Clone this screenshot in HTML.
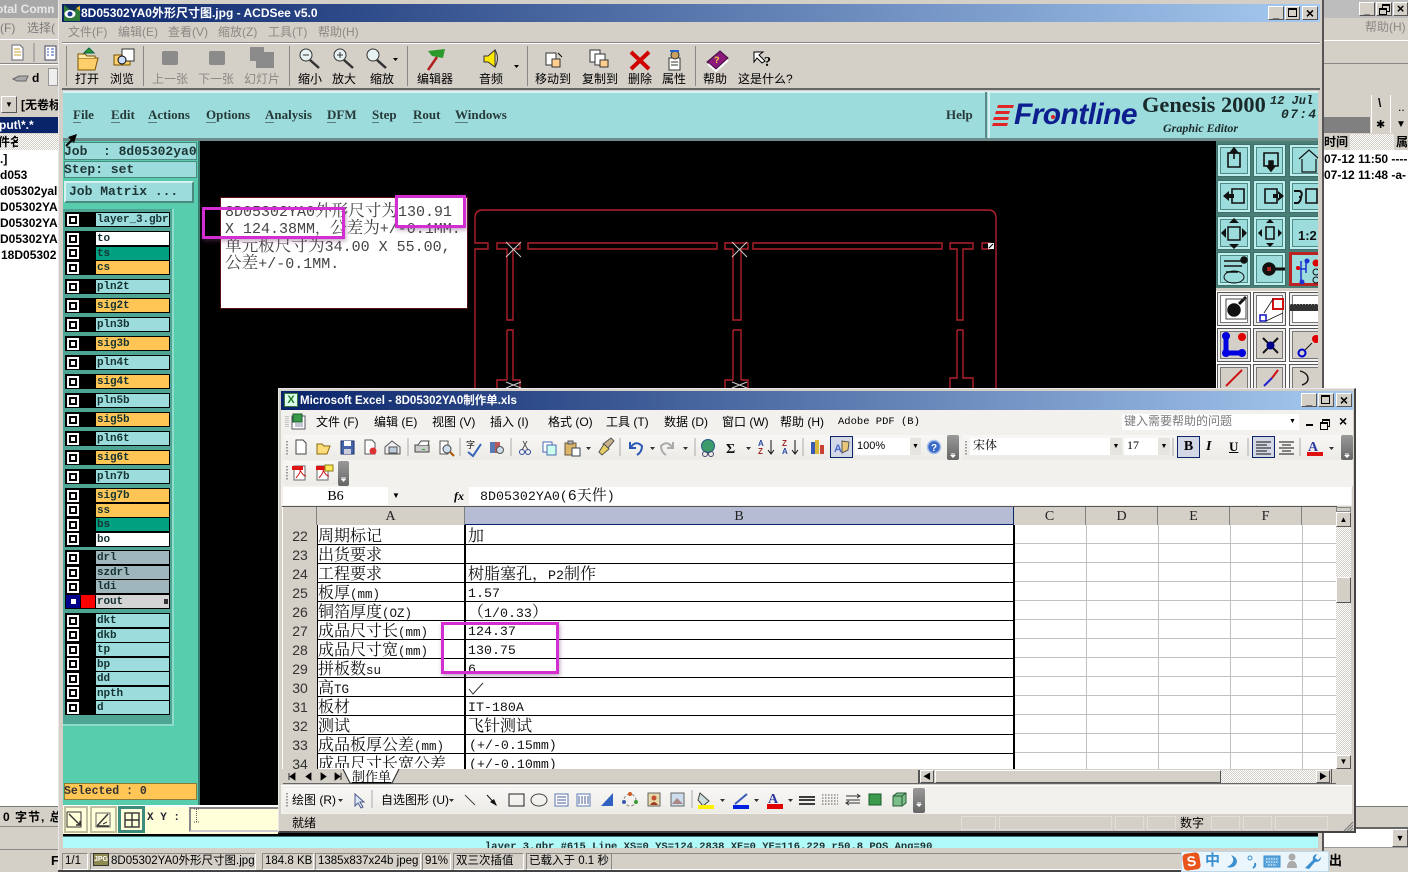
<!DOCTYPE html>
<html><head><meta charset="utf-8"><title>ACDSee Genesis Excel</title>
<style>
html,body{margin:0;padding:0;width:1408px;height:872px;overflow:hidden;background:#d4d0c8}
body{position:relative;font-family:"Liberation Sans","Noto Sans CJK SC",sans-serif;font-size:12px;color:#000}
div,svg{position:absolute}
.t{white-space:nowrap;line-height:16px}
.g{color:#8b8985}
.s{font-family:"Liberation Mono","Noto Serif CJK SC",serif;font-size:15px;line-height:18px;color:#444;white-space:nowrap;left:225px}
.s span{font-size:16.6px}
.cell{font-family:"Liberation Mono","Noto Serif CJK SC",serif;font-size:13.3px;line-height:18px;color:#111;white-space:nowrap;left:468px;margin-top:1px}
.ca{font-family:"Noto Serif CJK SC",serif;font-size:16px;line-height:18px;color:#111;white-space:nowrap;left:318px;margin-top:-1px}
.ca span{font-family:"Liberation Mono",monospace;font-size:12.5px}
.rn{left:284px;width:32px;text-align:center;font-size:14px;line-height:18px;color:#333}
.hl{left:317px;width:698px;height:1px;background:#000}
.cb{left:67px;width:8px;height:8px;border:2px solid #fff;background:#fff;box-shadow:inset 0 0 0 2px #000}
.n{left:96px;width:73px;height:13px;background:#9ddcdc;font:bold 11px/15px "Liberation Mono",monospace;color:#143232;letter-spacing:-.1px;padding-left:1px;box-sizing:border-box;white-space:nowrap;overflow:hidden}
.o{background:#ffc655}.w{background:#fff}.e{background:#00a080}.h{background:#9fb6bc}
.blk{left:65px;width:105px;background:#000}
.gm{font:bold 13px/16px "Liberation Serif",serif;color:#263a3a;white-space:nowrap}
.gm u{text-decoration:none;border-bottom:1px solid #5b7a7a}
.mag{border:3px solid #d22ed2;box-shadow:1px 2px 4px rgba(120,60,120,.45)}
.tb{background:#9ddcdc;box-shadow:inset 0 0 0 1px #3f6f6a,inset 0 0 0 3px #bfeeee,inset 0 0 0 4px #4c8a84}
.gb{background:#d4d0c8;box-shadow:inset 0 0 0 1px #555,inset 0 0 0 3px #eee,inset 0 0 0 4px #777}
.xm{font-size:12px;line-height:16px;white-space:nowrap}
.xm b{font-family:"Liberation Mono",monospace;font-weight:normal;font-size:11px}
.sb{top:853px;height:15px;border:1px solid #8c8984;border-right-color:#fff;border-bottom-color:#fff;font-size:11.5px;line-height:15px;white-space:nowrap;padding-left:2px;box-sizing:content-box;overflow:hidden}
.st{top:816px;height:12px;border:1px solid #e2dfd8}
.drop{background:#e6e4de;text-align:center;font-size:7px;line-height:17px;color:#000}
.hh{top:507px;height:18px;background:#d4d0c8;font:14px/19px "Liberation Serif",serif;text-align:center;color:#222;border-right:1px solid #808080;box-sizing:border-box}
.chk{background:repeating-conic-gradient(#d4d0c8 0 25%,#fff 0 50%) 0 0/2px 2px}
.btn{background:#d4d0c8;border:1px solid;border-color:#fff #555 #555 #fff;box-sizing:border-box}
</style></head><body>

<!-- left background window -->
<div style="left:0;top:0;width:58px;height:18px;background:#a9a9a9"></div>
<div class="t" style="left:0;top:1px;color:#e8e8e8;font-weight:bold;font-size:12px;width:58px;overflow:hidden;margin-left:-4px">otal Comm</div>
<div class="t g" style="left:0;top:20px;color:#7d7b77">(F)</div>
<div class="t g" style="left:27px;top:20px;width:31px;overflow:hidden;color:#7d7b77">选择(</div>
<div style="left:0;top:39px;width:58px;height:1px;background:#fff"></div>
<div style="left:0;top:63px;width:58px;height:1px;background:#888"></div>
<div style="left:0;top:64px;width:58px;height:1px;background:#fff"></div>
<svg style="left:0;top:40px" width="58" height="48" fill="none">
<path d="M12 5H20L23 8V20H12Z" fill="#fff" stroke="#667"/><path d="M14 9H20M14 12H21M14 15H21" stroke="#c9a030"/>
<path d="M34 3V22" stroke="#888"/><rect x="45" y="6" width="11" height="14" fill="#fff" stroke="#446"/><path d="M47 9H49M47 12H49M47 15H49M51 9H54M51 12H54M51 15H54" stroke="#3050b0"/>
<path d="M13 39L19 36H28L26 41H17Z" fill="#aaa" stroke="#666"/>
</svg>
<div class="t" style="left:32px;top:70px;font-weight:bold">d</div>
<div style="left:48px;top:68px;width:10px;height:18px;background:#eee;border:1px solid #999;box-sizing:border-box"></div>
<div class="btn" style="left:1px;top:96px;width:16px;height:17px;text-align:center;font-size:8px;line-height:15px">▼</div>
<div class="t" style="left:21px;top:97px;font-weight:bold;width:37px;overflow:hidden">[无卷标</div>
<div style="left:0;top:117px;width:58px;height:16px;background:#0a246a;color:#fff;font:bold 12px/16px 'Liberation Sans'; white-space:nowrap;overflow:hidden;margin:0"><span style="margin-left:-1px">put\*.*</span></div>
<div class="chk" style="left:0;top:134px;width:58px;height:16px"></div>
<div class="t" style="left:0;top:134px;font-weight:bold;width:20px;overflow:hidden;margin-left:-2px">件名</div>
<div style="left:0;top:150px;width:58px;height:656px;background:#fff"></div>
<div class="t" style="left:0;top:151px;font-weight:bold">.]</div>
<div class="t" style="left:0;top:167px;font-weight:bold">d053</div>
<div class="t" style="left:0;top:183px;font-weight:bold;width:58px;overflow:hidden">d05302yal</div>
<div class="t" style="left:0;top:199px;font-weight:bold;width:58px;overflow:hidden">D05302YA</div>
<div class="t" style="left:0;top:215px;font-weight:bold;width:58px;overflow:hidden">D05302YA</div>
<div class="t" style="left:0;top:231px;font-weight:bold;width:58px;overflow:hidden">D05302YA</div>
<div class="t" style="left:1px;top:247px;font-weight:bold;width:57px;overflow:hidden">18D05302</div>
<div style="left:0;top:806px;width:58px;height:20px;background:#d4d0c8;border-top:1px solid #777;box-sizing:border-box"></div>
<div class="t" style="left:3px;top:809px;font-weight:bold;width:55px;overflow:hidden;letter-spacing:1px">0 字节, 总</div>
<div style="left:0;top:826px;width:58px;height:1px;background:#888"></div>
<div style="left:0;top:849px;width:58px;height:1px;background:#888"></div>
<div class="t" style="left:51px;top:853px;font-weight:bold;font-size:13px">F</div>

<!-- right background window -->
<div style="left:1324px;top:0;width:84px;height:18px;background:#bdbdbd"></div>
<div class="btn" style="left:1359px;top:2px;width:16px;height:14px;font-size:10px;text-align:center;line-height:16px;font-weight:bold">_</div>
<div class="btn" style="left:1376px;top:2px;width:16px;height:14px"></div>
<div style="left:1382px;top:4px;width:6px;height:5px;border:1px solid #000;border-top-width:2px;box-sizing:content-box"></div><div style="left:1379px;top:8px;width:6px;height:4px;border:1px solid #000;border-top-width:2px;background:#d4d0c8"></div>
<div class="btn" style="left:1393px;top:2px;width:15px;height:14px;font-size:13px;text-align:center;line-height:11px;font-weight:bold">×</div>
<div class="t g" style="left:1365px;top:19px;font-size:12px">帮助(H)</div>
<div style="left:1324px;top:40px;width:84px;height:1px;background:#fff"></div>
<div style="left:1324px;top:63px;width:84px;height:1px;background:#888"></div>
<div style="left:1324px;top:117px;width:46px;height:16px;background:#808080"></div>
<div class="t" style="left:1378px;top:95px;font-weight:bold">\</div>
<div class="t" style="left:1398px;top:99px;">..</div>
<div class="t" style="left:1376px;top:117px;font-size:11px">✱</div>
<div class="t" style="left:1396px;top:117px;font-size:10px">▼</div>
<div style="left:1371px;top:95px;width:1px;height:38px;background:#fff"></div>
<div style="left:1390px;top:95px;width:1px;height:38px;background:#fff"></div>
<div class="chk" style="left:1324px;top:134px;width:84px;height:16px"></div>
<div class="t" style="left:1324px;top:134px;font-weight:bold;background:#d4d0c8;padding-right:2px;overflow:hidden;width:24px">时间</div>
<div class="t" style="left:1394px;top:134px;font-weight:bold;background:#d4d0c8;padding:0 2px;width:12px;overflow:hidden">属</div>
<div style="left:1324px;top:150px;width:84px;height:656px;background:#fff"></div>
<div class="t" style="left:1324px;top:151px;font-weight:bold;white-space:nowrap;overflow:hidden;width:84px">07-12 11:50 ----</div>
<div class="t" style="left:1324px;top:167px;font-weight:bold;white-space:nowrap;overflow:hidden;width:84px">07-12 11:48 -a-</div>
<div style="left:1324px;top:806px;width:84px;height:21px;background:#d4d0c8;border-top:1px solid #777;box-sizing:border-box"></div>
<div style="left:1324px;top:827px;width:84px;height:21px;background:#fff;border-top:2px solid #666;border-bottom:1px solid #999;box-sizing:border-box"></div>
<div class="btn" style="left:1392px;top:829px;width:16px;height:18px;font-size:9px;text-align:center;line-height:16px">▼</div>
<div class="t" style="left:1329px;top:853px;font-weight:bold;font-size:13px">出</div>

<!-- ACDSee window -->
<div style="left:58px;top:0;width:1266px;height:872px;background:#d4d0c8;border-right:2px solid #555;box-sizing:border-box;border-left:1px solid #e8e8e8"></div>
<div style="left:62px;top:4px;width:1258px;height:18px;background:linear-gradient(90deg,#0a246a,#a6caf0)"></div>
<svg style="left:64px;top:5px" width="16" height="16"><rect width="16" height="16" fill="#2f7a3a"/><path d="M0 0H16L9 7Z" fill="#0d2a5a"/><ellipse cx="6" cy="9" rx="5.500" ry="4" fill="#fff"/><circle cx="6" cy="9" r="2.500" fill="#1a3a8a"/><path d="M12 3L16 1V6Z" fill="#e8b030"/></svg>
<div class="t" style="left:81px;top:5px;color:#fff;font-weight:bold;font-size:12px">8D05302YA0外形尺寸图.jpg - ACDSee v5.0</div>
<div class="btn" style="left:1268px;top:6px;width:16px;height:14px;text-align:center;font-weight:bold;font-size:11px;line-height:14px">_</div>
<div class="btn" style="left:1285px;top:6px;width:15px;height:14px"></div>
<div style="left:1288px;top:8px;width:9px;height:9px;border:1px solid #000;border-top-width:2px;box-sizing:border-box"></div>
<div class="btn" style="left:1302px;top:6px;width:16px;height:14px;text-align:center;font-weight:bold;font-size:14px;line-height:12px">×</div>
<div class="t g" style="left:68px;top:24px">文件(F)</div><div class="t g" style="left:118px;top:24px">编辑(E)</div><div class="t g" style="left:168px;top:24px">查看(V)</div><div class="t g" style="left:218px;top:24px">缩放(Z)</div><div class="t g" style="left:268px;top:24px">工具(T)</div><div class="t g" style="left:318px;top:24px">帮助(H)</div>
<div style="left:62px;top:42px;width:1258px;height:1px;background:#888"></div>
<div style="left:62px;top:43px;width:1258px;height:1px;background:#fff"></div>
<div style="left:62px;top:88px;width:1258px;height:2px;background:#666"></div>
<div style="left:66px;top:46px;width:1px;height:40px;background:#888"></div>
<div style="left:143px;top:46px;width:1px;height:40px;background:#888"></div>
<div style="left:289px;top:46px;width:1px;height:40px;background:#888"></div>
<div style="left:407px;top:46px;width:1px;height:40px;background:#888"></div>
<div style="left:527px;top:46px;width:1px;height:40px;background:#888"></div>
<div style="left:695px;top:46px;width:1px;height:40px;background:#888"></div>
<div class="t" style="left:75px;top:71px">打开</div><div class="t" style="left:110px;top:71px">浏览</div>
<div class="t g" style="left:152px;top:71px">上一张</div><div class="t g" style="left:198px;top:71px">下一张</div><div class="t g" style="left:244px;top:71px">幻灯片</div>
<div class="t" style="left:298px;top:71px">缩小</div><div class="t" style="left:332px;top:71px">放大</div><div class="t" style="left:370px;top:71px">缩放</div>
<div class="t" style="left:417px;top:71px">编辑器</div><div class="t" style="left:479px;top:71px">音频</div>
<div class="t" style="left:535px;top:71px">移动到</div><div class="t" style="left:582px;top:71px">复制到</div><div class="t" style="left:628px;top:71px">删除</div><div class="t" style="left:662px;top:71px">属性</div>
<div class="t" style="left:703px;top:71px">帮助</div><div class="t" style="left:738px;top:71px">这是什么?</div>

<!-- Genesis -->
<div style="left:63px;top:91px;width:1255px;height:50px;background:#9ddcdc;border-top:2px solid #d8f2f2;border-bottom:3px solid #6d8d8d;box-sizing:border-box"></div>
<div class="gm" style="left:73px;top:107px"><u>F</u>ile</div><div class="gm" style="left:111px;top:107px"><u>E</u>dit</div><div class="gm" style="left:148px;top:107px"><u>A</u>ctions</div><div class="gm" style="left:206px;top:107px"><u>O</u>ptions</div><div class="gm" style="left:265px;top:107px"><u>A</u>nalysis</div><div class="gm" style="left:327px;top:107px"><u>D</u>FM</div><div class="gm" style="left:372px;top:107px"><u>S</u>tep</div><div class="gm" style="left:413px;top:107px"><u>R</u>out</div><div class="gm" style="left:455px;top:107px"><u>W</u>indows</div><div class="gm" style="left:946px;top:107px">Help</div>
<div style="left:985px;top:92px;width:2px;height:46px;background:#5f8a8a"></div>
<div style="left:988px;top:92px;width:2px;height:46px;background:#d8f2f2"></div>
<div style="left:1014px;top:97px;font:italic bold 30px/36px 'Liberation Sans';color:#0d1f8f;letter-spacing:-.6px;white-space:nowrap">Frontline</div>
<div style="left:1051px;top:115px;width:4px;height:4px;background:#e02020;border-radius:50%"></div>
<div style="left:1142px;top:91px;font:bold 22.400px/28px 'Liberation Serif';color:#1a2a2a;white-space:nowrap">Genesis 2000</div>
<div style="left:1163px;top:120px;font:italic bold 12px/16px 'Liberation Serif';color:#1a2a2a;white-space:nowrap">Graphic Editor</div>
<div style="left:1270px;top:94px;font:italic bold 12px/14px 'Liberation Mono';color:#1a2a2a;white-space:nowrap">12 Jul</div>
<div style="left:1281px;top:108px;font:italic bold 13px/14px 'Liberation Mono';color:#1a2a2a;white-space:nowrap;width:37px;overflow:hidden;letter-spacing:1.3px">07:45</div>

<div style="left:63px;top:141px;width:1255px;height:695px;background:#000"></div>
<div style="left:63px;top:141px;width:135px;height:665px;background:#57cdae"></div>
<div style="left:198px;top:141px;width:2px;height:665px;background:#3d7c70"></div>
<div style="left:64px;top:142px;width:133px;height:18px;background:#9ddcdc;box-shadow:inset 0 0 0 1px #4b8a80;font:bold 13px/19px 'Liberation Mono';color:#1d3535;white-space:pre">Job  : 8d05302ya0</div>
<div style="left:64px;top:161px;width:133px;height:17px;background:#9ddcdc;box-shadow:inset 0 0 0 1px #4b8a80;font:bold 13px/17px 'Liberation Mono';color:#1d3535;white-space:pre">Step: set</div>
<div style="left:64px;top:181px;width:130px;height:22px;background:#9ddcdc;border:2px solid;border-color:#d8f2f2 #4b8a80 #4b8a80 #d8f2f2;box-sizing:border-box;font:bold 13px/18px 'Liberation Mono';color:#1d3535;white-space:pre;padding-left:3px">Job Matrix ...</div>
<div style="left:63px;top:209px;width:111px;height:517px;background:#4ea594;border-right:2px solid #8edcca;border-bottom:2px solid #8edcca;box-sizing:border-box"></div>

<!-- layers black boxes -->
<div class="blk" style="top:212px;height:15px"></div><div class="blk" style="top:231px;height:44px"></div><div class="blk" style="top:279px;height:15px"></div><div class="blk" style="top:298px;height:15px"></div><div class="blk" style="top:317px;height:15px"></div><div class="blk" style="top:336px;height:15px"></div><div class="blk" style="top:355px;height:15px"></div><div class="blk" style="top:374px;height:15px"></div><div class="blk" style="top:393px;height:15px"></div><div class="blk" style="top:412px;height:15px"></div><div class="blk" style="top:431px;height:15px"></div><div class="blk" style="top:450px;height:15px"></div><div class="blk" style="top:469px;height:15px"></div><div class="blk" style="top:488px;height:59px"></div><div class="blk" style="top:550px;height:59px"></div><div class="blk" style="top:613px;height:102px"></div>
<div class="cb" style="top:214px"></div><div class="n" style="top:213px">layer_3.gbr</div>
<div class="cb" style="top:233px"></div><div class="n w" style="top:232px">to</div>
<div class="cb" style="top:247px"></div><div class="n e" style="top:247px">ts</div>
<div class="cb" style="top:262px"></div><div class="n o" style="top:261px">cs</div>
<div class="cb" style="top:281px"></div><div class="n" style="top:280px">pln2t</div>
<div class="cb" style="top:300px"></div><div class="n o" style="top:299px">sig2t</div>
<div class="cb" style="top:319px"></div><div class="n" style="top:318px">pln3b</div>
<div class="cb" style="top:338px"></div><div class="n o" style="top:337px">sig3b</div>
<div class="cb" style="top:357px"></div><div class="n" style="top:356px">pln4t</div>
<div class="cb" style="top:376px"></div><div class="n o" style="top:375px">sig4t</div>
<div class="cb" style="top:395px"></div><div class="n" style="top:394px">pln5b</div>
<div class="cb" style="top:414px"></div><div class="n o" style="top:413px">sig5b</div>
<div class="cb" style="top:433px"></div><div class="n" style="top:432px">pln6t</div>
<div class="cb" style="top:452px"></div><div class="n o" style="top:451px">sig6t</div>
<div class="cb" style="top:471px"></div><div class="n" style="top:470px">pln7b</div>
<div class="cb" style="top:490px"></div><div class="n o" style="top:489px">sig7b</div>
<div class="cb" style="top:504px"></div><div class="n o" style="top:504px">ss</div>
<div class="cb" style="top:519px"></div><div class="n e" style="top:518px">bs</div>
<div class="cb" style="top:533px"></div><div class="n w" style="top:533px">bo</div>
<div class="cb" style="top:552px"></div><div class="n h" style="top:551px">drl</div>
<div class="cb" style="top:567px"></div><div class="n h" style="top:566px">szdrl</div>
<div class="cb" style="top:581px"></div><div class="n h" style="top:580px">ldi</div>
<div style="left:66px;top:595px;width:14px;height:13px;background:#000088"></div>
<div style="left:71px;top:599px;width:5px;height:5px;background:#fff"></div>
<div style="left:81px;top:595px;width:14px;height:13px;background:#f00"></div>
<div class="n" style="top:595px;background:#d4d4d4">rout</div><div style="left:164px;top:599px;width:4px;height:5px;background:#333"></div>
<div class="cb" style="top:615px"></div><div class="n" style="top:614px">dkt</div>
<div class="cb" style="top:629px"></div><div class="n" style="top:629px">dkb</div>
<div class="cb" style="top:644px"></div><div class="n" style="top:643px">tp</div>
<div class="cb" style="top:658px"></div><div class="n" style="top:658px">bp</div>
<div class="cb" style="top:673px"></div><div class="n" style="top:672px">dd</div>
<div class="cb" style="top:687px"></div><div class="n" style="top:687px">npth</div>
<div class="cb" style="top:702px"></div><div class="n" style="top:701px">d</div>

<div style="left:64px;top:783px;width:133px;height:17px;background:#ffc655;box-shadow:inset 0 0 0 1px #8a7a3a;font:bold 11.5px/17px 'Liberation Mono';color:#333;white-space:pre">Selected : 0</div>
<div style="left:63px;top:805px;width:215px;height:29px;background:#ffffd9;border-top:2px solid #fff;box-sizing:border-box"></div>
<div style="left:64px;top:806px;width:24px;height:27px;background:#ffffd9;box-shadow:inset 0 0 0 2px #c0c0a0"></div>
<div style="left:90px;top:806px;width:27px;height:27px;background:#ffffd9;box-shadow:inset 0 0 0 2px #c0c0a0"></div>
<div style="left:118px;top:806px;width:27px;height:27px;background:#ffffd9;box-shadow:inset 0 0 0 3px #3d8c80"></div>
<svg style="left:63px;top:805px" width="130" height="30" fill="none" stroke="#333">
<rect x="4" y="7" width="14" height="15"/><path d="M6 9L17 20M13 20H17V16" stroke-width="1.400"/>
<path d="M33 8H47V22H33Z" stroke="#666"/><path d="M34 21H46M34 21L45 9" stroke-width="1.400"/><path d="M40 19L44 17" stroke-width="1"/>
<rect x="62" y="8" width="14" height="14" stroke-width="1.400"/><path d="M69 8V22M62 15H76" stroke-width="1.400"/>
</svg>
<div style="left:147px;top:811px;font:bold 11px/14px 'Liberation Mono';color:#223;white-space:pre">X Y :</div>
<div style="left:189px;top:807px;width:91px;height:25px;background:#ffffd9;border:2px solid;border-color:#888 #fff #ccc #888;box-sizing:border-box"></div>
<svg style="left:193px;top:808px" width="8" height="16" fill="none"><path d="M1 1H6M1 14H6M3.500 1V14" stroke="#555" stroke-dasharray="1 1"/></svg>
<div style="left:63px;top:836px;width:1255px;height:12px;background:#b0fafa;overflow:hidden;border-top:1px solid #3e7777;box-sizing:border-box"><div style="left:422px;top:4px;font:bold 10.5px/12px 'Liberation Mono';color:#233;white-space:nowrap">layer_3.gbr #615 Line XS=0 YS=124.2838 XE=0 YE=116.229 r50.8 POS Ang=90</div></div>

<!-- canvas drawing -->
<svg style="left:0;top:0" width="1408" height="872" fill="none">
<g stroke="#b2202c" stroke-width="1.4">
<path d="M475 388V249H488V243H475V218Q475 210 483 210H988Q996 210 996 218V388"/>
<path d="M497 243H520V249H513V320H507V249H497ZM507 330H513V380H520V388M507 380V330"/>
<path d="M528 243H717V249H528ZM753 243H942V249H753Z"/>
<path d="M725 243H748V249H741V320H733V249H725ZM733 330H741V380M733 330V380"/>
<path d="M950 243H973V249H963V320H957V249H950ZM957 330H963V378H973V388M957 330V378H950V388"/>
<path d="M982 243H990V249H982Z"/>
<path d="M507 380H497V388M733 380H725V388M741 380H748V388"/>
</g>
<rect x="988" y="243" width="6" height="6" fill="#eee"/><path d="M989 248L993 244" stroke="#000"/>
<path d="M506 242L521 257M521 242L506 257M732 242L747 257M747 242L732 257" stroke="#c9c9c9"/>
<path d="M506 382L521 388M521 382L506 388M732 382L747 388M747 382L732 388" stroke="#c9c9c9"/>
<path d="M66 146L73 139" stroke="#000" stroke-width="2"/><path d="M77 134L68 137L74 143Z" fill="#000"/>
</svg>

<!-- tool buttons -->
<div style="left:1216px;top:141px;width:102px;height:250px;background:#4a7f78;overflow:hidden">
<div class="tb" style="left:1px;top:3px;width:34px;height:33px"></div><div class="tb" style="left:37px;top:3px;width:33px;height:33px"></div><div class="tb" style="left:73px;top:3px;width:34px;height:33px"></div>
<div class="tb" style="left:1px;top:39px;width:34px;height:33px"></div><div class="tb" style="left:37px;top:39px;width:33px;height:33px"></div><div class="tb" style="left:73px;top:39px;width:34px;height:33px"></div>
<div class="tb" style="left:1px;top:75px;width:34px;height:34px"></div><div class="tb" style="left:37px;top:75px;width:33px;height:34px"></div><div class="tb" style="left:73px;top:75px;width:34px;height:34px"></div>
<div class="tb" style="left:1px;top:111px;width:34px;height:34px"></div><div class="tb" style="left:37px;top:111px;width:33px;height:34px"></div><div class="tb" style="left:73px;top:111px;width:34px;height:34px;box-shadow:inset 0 0 0 3px #b22"></div>
<div style="left:0;top:147px;width:102px;height:3px;background:#d4d0c8"></div>
<div class="gb" style="left:0;top:150px;width:102px;height:100px;box-shadow:none;background:#fff"></div>
<div class="gb" style="left:1px;top:151px;width:34px;height:34px;background:#fff"></div><div class="gb" style="left:37px;top:151px;width:33px;height:34px;background:#fff"></div><div class="gb" style="left:73px;top:151px;width:34px;height:34px;background:#fff"></div>
<div class="gb" style="left:1px;top:187px;width:34px;height:34px"></div><div class="gb" style="left:37px;top:187px;width:33px;height:34px"></div><div class="gb" style="left:73px;top:187px;width:34px;height:34px"></div>
<div class="gb" style="left:1px;top:223px;width:34px;height:34px"></div><div class="gb" style="left:37px;top:223px;width:33px;height:34px"></div><div class="gb" style="left:73px;top:223px;width:34px;height:34px"></div>
</div>
<svg style="left:1216px;top:141px" width="102" height="247" fill="none" stroke="#111" stroke-width="1.5">
<path d="M12 12H24V26H12Z M18 10V18" stroke-width="1.6"/><path d="M14 12L18 7L22 12Z" fill="#111"/>
<path d="M48 12H62V25H48Z" stroke-width="1.6"/><path d="M51 25L55 30L59 25Z M53 20H57V26H53Z" fill="#111"/>
<path d="M83 18L93 9L103 18M86 18V31H100V18" stroke-width="1.2"/>
<path d="M16 48H28V62H16Z" stroke-width="1.6"/><path d="M7 55L13 50V60Z M12 53H18V57H12Z" fill="#111" stroke="none"/>
<path d="M49 48H61V62H49Z" stroke-width="1.6"/><path d="M68 55L62 50V60Z M57 53H63V57H57Z" fill="#111" stroke="none"/>
<path d="M90 48H101V62H90Z" stroke-width="1.6"/><path d="M78 50H84Q87 52 85 56L83 56M78 62H82Q85 60 85 56" stroke-width="2"/>
<path d="M12 86H24V99H12Z"/><path d="M18 77L13 82H23ZM18 108L13 103H23ZM5 92L10 87V97ZM31 92L26 87V97Z" fill="#111" stroke="none"/>
<path d="M50 86H58V98H50Z" stroke-width="1.6"/><path d="M54 78L50 82H58ZM54 106L50 102H58ZM42 92L46 88V96ZM66 92L62 88V96Z" fill="#111" stroke="none"/>
<text x="82" y="99" font-family="Liberation Sans" font-weight="bold" font-size="13" fill="#111" stroke="none">1:2</text>
<path d="M8 120H28M8 125H26M10 131H22" stroke-width="1.4"/><ellipse cx="18" cy="136" rx="10" ry="6" stroke-width="1"/><circle cx="28" cy="119" r="3" fill="#111"/>
<circle cx="53" cy="128" r="6" fill="#111"/><path d="M57 128H69" stroke-width="3"/><rect x="51" y="126" width="4" height="4" fill="#a22" stroke="none"/>
<path d="M85 120V140M90 128H82M90 118V132" stroke="#2030d0"/><circle cx="91" cy="120" r="2.5" fill="#2030d0" stroke="none"/><circle cx="100" cy="122" r="3.5" fill="#d00" stroke="none"/><circle cx="100" cy="131" r="3" stroke-width="1"/><circle cx="100" cy="139" r="3" stroke-width="1"/><circle cx="86" cy="141" r="2.5" fill="#2030d0" stroke="none"/><circle cx="82" cy="127" r="2" fill="#d00" stroke="none"/>
<circle cx="18" cy="169" r="6" fill="#111"/><path d="M23 163L30 156" stroke-width="3"/><rect x="10" y="158" width="20" height="20" stroke-width="1" stroke="#444"/>
<rect x="57" y="158" width="10" height="10" stroke="#d01010" stroke-width="2"/><rect x="44" y="174" width="6" height="6" stroke="#1010c0" stroke-width="1.5"/><path d="M48 172L57 158M50 180L67 172" stroke-width=".8"/>
<rect x="74" y="163" width="28" height="7" fill="#333" stroke="none"/><path d="M74 162H102" stroke="#fff" stroke-dasharray="1 2" stroke-width="3"/>
<path d="M10 196V212H25" stroke="#0000e0" stroke-width="5"/><circle cx="10" cy="195" r="4" fill="#0000e0" stroke="none"/><circle cx="10" cy="212" r="4" fill="#0000e0" stroke="none"/><circle cx="26" cy="212" r="4" fill="#0000e0" stroke="none"/><circle cx="26" cy="196" r="4" fill="#e00000" stroke="none"/>
<path d="M47 197L62 212M62 197L47 212" stroke-width="2"/><circle cx="54.500" cy="204.500" r="4" fill="#00008a" stroke="none"/>
<circle cx="86" cy="212" r="3.500" stroke="#0000d0" stroke-width="2"/><circle cx="100" cy="198" r="4" fill="#e00000" stroke="none"/><path d="M89 209L96 202" stroke-width="1"/>
<path d="M10 245L26 229" stroke="#d01010" stroke-width="2"/>
<path d="M48 245L56 237" stroke="#2020d0" stroke-width="2"/><path d="M56 237L62 229" stroke="#d01010" stroke-width="2"/>
<path d="M84 230Q92 232 92 238Q92 242 86 244" stroke-width="1.400"/>
</svg>

<!-- logo stripes -->
<svg style="left:990px;top:100px" width="30" height="30"><path d="M8 5H24L23 8H7ZM6 11H20L19 14H5ZM4 17H19L18 20H3ZM3 23H18L17 26H2Z" fill="#e02626"/></svg>

<!-- ACDSee toolbar icons -->
<svg style="left:0;top:0" width="800" height="90" fill="none" stroke-width="1">
<path d="M78 58H98L95 70H78Z" fill="#ffcf6b" stroke="#7a5400"/><path d="M78 58V54H85L87 56H95V58" fill="#ffe9a8" stroke="#7a5400"/><path d="M89 48L84 53H94Z" fill="#2e9a2e" stroke="#064"/>
<rect x="114" y="55" width="16" height="10" fill="#ffcf6b" stroke="#7a5400"/><rect x="122" y="49" width="12" height="12" fill="#fff" stroke="#333"/><circle cx="122" cy="60" r="4" fill="#cdf" stroke="#000"/>
<rect x="162" y="51" width="16" height="14" rx="2" fill="#8b8b8b"/><rect x="209" y="51" width="16" height="14" rx="2" fill="#8b8b8b"/><rect x="250" y="47" width="14" height="14" fill="#8b8b8b"/><rect x="256" y="52" width="18" height="16" fill="#8b8b8b"/>
<g stroke="#333"><circle cx="306" cy="55" r="6" fill="#e8f2f2"/><path d="M310 60L319 68" stroke-width="2.500"/><circle cx="340" cy="55" r="6" fill="#e8f2f2"/><path d="M344 60L353 68" stroke-width="2.500"/><circle cx="373" cy="55" r="6" fill="#e8f2f2"/><path d="M377 60L386 68" stroke-width="2.500"/><path d="M303 55H309M337 55H343M340 52V58"/></g>
<path d="M393 58L398 58L395.500 61Z" fill="#000"/>
<path d="M428 70L437 57" stroke="#b02020" stroke-width="2.500"/><path d="M428 51L445 49L443 58L432 56Z" fill="#2a9a2a"/><path d="M514 65L519 65L516.500 68Z" fill="#000"/>
<path d="M484 56H488L495 50V67L488 62H484Z" fill="#ffe900" stroke="#333"/><path d="M495 50Q500 58 495 67" stroke="#333"/>
<rect x="546" y="53" width="10" height="12" fill="#fff" stroke="#333"/><rect x="552" y="59" width="8" height="8" fill="#ffcf90" stroke="#333"/><path d="M558 53L562 57" stroke="#000"/>
<rect x="590" y="50" width="10" height="12" fill="#fff" stroke="#333"/><rect x="595" y="54" width="10" height="11" fill="#fff" stroke="#333"/><rect x="600" y="60" width="8" height="7" fill="#ffcf90" stroke="#333"/>
<path d="M631 52L649 69M649 52L631 69" stroke="#d00000" stroke-width="4"/>
<rect x="669" y="58" width="11" height="12" fill="#fff" stroke="#333"/><circle cx="675" cy="55" r="4" fill="#c9a060" stroke="#333"/><rect x="670" y="50" width="9" height="2" fill="#2060d0"/><path d="M671 62H678M671 65H678" stroke="#333"/>
<path d="M707 62L720 51L728 58L716 69Z" fill="#8a1b7c" stroke="#3a0a3a"/><path d="M708 64L716 71L728 60" stroke="#fff" stroke-width="2"/><text x="714" y="63" fill="#ffd23c" font-size="9" font-weight="bold" font-family="Liberation Sans">?</text>
<path d="M754 52L763 52L759 55L765 61L762 63L757 58L754 62Z" fill="#fff" stroke="#000"/><text x="764" y="66" font-size="14" fill="#000" font-weight="bold" font-family="Liberation Serif">?</text>
</svg>

<!-- annotation note -->
<div style="left:220px;top:197px;width:248px;height:112px;background:#fff;border:1px solid #5a1010;box-sizing:border-box"></div>
<div class="s" style="top:203px">8D05302YA0<span>外形尺寸为</span>130.91</div>
<div class="s" style="top:220px">X 124.38MM，<span>公差为</span>+/-0.1MM.</div>
<div class="s" style="top:238px"><span>单元板尺寸为</span>34.00 X 55.00,</div>
<div class="s" style="top:255px"><span>公差</span>+/-0.1MM.</div>
<div class="mag" style="left:202px;top:207px;width:137px;height:26px"></div>
<div class="mag" style="left:395px;top:195px;width:65px;height:27px"></div>

<!-- ACDSee status -->
<div class="sb" style="left:62px;width:22px">1/1</div>
<div class="sb" style="left:90px;width:166px;padding-left:20px;box-sizing:border-box;height:17px">8D05302YA0外形尺寸图.jpg</div>
<div style="left:93px;top:853px;width:16px;height:13px;background:#8f8a50;border:1px solid #333;box-sizing:border-box;color:#fff;font:bold 7px/11px 'Liberation Sans';text-align:center">JPG</div>
<div class="sb" style="left:262px;width:48px">184.8 KB</div>
<div class="sb" style="left:315px;width:102px">1385x837x24b jpeg</div>
<div class="sb" style="left:422px;width:25px">91%</div>
<div class="sb" style="left:453px;width:67px">双三次插值</div>
<div class="sb" style="left:526px;width:82px">已载入于 0.1 秒</div>
<div class="sb" style="left:611px;width:570px"></div>
<div style="left:58px;top:870px;width:1266px;height:2px;background:#444"></div>

<!-- Excel window -->
<div style="left:278px;top:388px;width:1078px;height:445px;background:#d4d0c8;border:1px solid #e8e8e8;border-right:2px solid #444;border-bottom:2px solid #444;box-sizing:border-box"></div>
<div style="left:281px;top:391px;width:1072px;height:19px;background:linear-gradient(90deg,#0a246a,#a6caf0)"></div>
<div style="left:284px;top:393px;width:14px;height:14px;background:#dfe;border:1px solid #3a7a3a;box-sizing:border-box;color:#1a7a1a;font:bold 11px/12px 'Liberation Sans';text-align:center">X</div>
<div class="t" style="left:300px;top:393px;color:#fff;font-weight:bold;font-size:11.5px">Microsoft Excel - 8D05302YA0制作单.xls</div>
<div class="btn" style="left:1301px;top:393px;width:16px;height:14px;text-align:center;font-weight:bold;font-size:11px;line-height:14px">_</div>
<div class="btn" style="left:1318px;top:393px;width:16px;height:14px"></div><div style="left:1321px;top:395px;width:9px;height:9px;border:1px solid #000;border-top-width:2px;box-sizing:border-box"></div>
<div class="btn" style="left:1336px;top:393px;width:16px;height:14px;text-align:center;font-weight:bold;font-size:14px;line-height:12px">×</div>
<div style="left:281px;top:410px;width:1072px;height:76px;background:#f2f1ee"></div>
<div style="left:283px;top:435px;width:670px;height:25px;background:linear-gradient(#f8f7f5,#ecebe6);border-radius:3px"></div>
<div style="left:962px;top:435px;width:390px;height:25px;background:linear-gradient(#f8f7f5,#ecebe6);border-radius:3px"></div>
<div style="left:283px;top:461px;width:56px;height:24px;background:linear-gradient(#f8f7f5,#ecebe6);border-radius:3px"></div>
<svg style="left:285px;top:412px" width="24" height="20" fill="none"><path d="M3 4V15M1 4V15" stroke="#999" stroke-dasharray="1 1"/><rect x="7" y="4" width="13" height="13" fill="#fff" stroke="#556"/><rect x="8" y="2" width="9" height="8" fill="#3a9a4a" stroke="#1a5a2a"/><path d="M10 12H18M10 14H18" stroke="#88a"/></svg>
<div class="xm" style="left:316px;top:414px">文件 (F)</div><div class="xm" style="left:374px;top:414px">编辑 (E)</div><div class="xm" style="left:432px;top:414px">视图 (V)</div><div class="xm" style="left:490px;top:414px">插入 (I)</div><div class="xm" style="left:548px;top:414px">格式 (O)</div><div class="xm" style="left:606px;top:414px">工具 (T)</div><div class="xm" style="left:664px;top:414px">数据 (D)</div><div class="xm" style="left:722px;top:414px">窗口 (W)</div><div class="xm" style="left:780px;top:414px">帮助 (H)</div>
<div class="xm" style="left:838px;top:414px;font-family:'Liberation Mono';font-size:10.5px">Adobe PDF (B)</div>
<div style="left:1122px;top:414px;width:177px;height:16px;background:#fff"></div>
<div class="xm" style="left:1124px;top:413px;color:#7a7a7a">键入需要帮助的问题</div>
<div class="t" style="left:1289px;top:414px;font-size:7px">▼</div>
<div style="left:1306px;top:424px;width:7px;height:2px;background:#000"></div>
<div style="left:1322px;top:419px;width:6px;height:5px;border:1px solid #000;border-top-width:2px"></div><div style="left:1320px;top:422px;width:6px;height:5px;border:1px solid #000;border-top-width:2px;background:#f2f1ee"></div>
<div class="t" style="left:1339px;top:413px;font-weight:bold;font-size:14px">×</div>
<!-- boxes -->
<div style="left:830px;top:436px;width:23px;height:22px;border:1px solid #0a246a;background:#d4d8e6;box-sizing:border-box"></div>
<div style="left:855px;top:438px;width:66px;height:17px;background:#fff"></div>
<div class="drop" style="left:910px;top:438px;width:11px;height:17px">▼</div>
<div class="t" style="left:857px;top:438px;font-size:11px;font-family:'Liberation Sans'">100%</div>
<div style="left:970px;top:438px;width:152px;height:17px;background:#fff"></div>
<div class="drop" style="left:1110px;top:438px;width:12px;height:17px">▼</div>
<div class="t" style="left:973px;top:437px;font-size:12px;font-family:'Noto Serif CJK SC',serif">宋体</div>
<div style="left:1124px;top:438px;width:46px;height:17px;background:#fff"></div>
<div class="drop" style="left:1158px;top:438px;width:12px;height:17px">▼</div>
<div class="t" style="left:1127px;top:437px;font-size:12px;font-family:'Liberation Serif'">17</div>
<div style="left:1177px;top:436px;width:23px;height:22px;border:1px solid #0a246a;background:#d4d8e6;box-sizing:border-box;font:bold 14px/20px 'Liberation Serif';text-align:center">B</div>
<div class="t" style="left:1206px;top:439px;font:italic bold 14px/16px 'Liberation Serif'">I</div>
<div class="t" style="left:1229px;top:439px;font:bold 13px/16px 'Liberation Serif';text-decoration:underline">U</div>
<div style="left:1252px;top:436px;width:23px;height:22px;border:1px solid #0a246a;background:#d4d8e6;box-sizing:border-box"></div>
<div style="left:947px;top:435px;width:12px;height:25px;background:linear-gradient(#999,#666);border-radius:2px"></div>
<div style="left:1341px;top:435px;width:12px;height:25px;background:linear-gradient(#999,#666);border-radius:2px"></div>
<div style="left:338px;top:461px;width:11px;height:25px;background:linear-gradient(#999,#666);border-radius:2px"></div>
<svg style="left:0;top:0" width="1408" height="872" fill="none" stroke-width="1">
<path d="M287 441V456M966 441V456M287 466V481" stroke="#999" stroke-dasharray="1.500 1.500" stroke-width="2"/>
<path d="M408 438V456M460 438V456M511 438V456M620 438V456M695 438V456M803 438V456M1173 438V456M1248 438V456M1300 438V456" stroke="#aaa"/>
<path d="M951 454H955M1345 454H1349M341 478H346" stroke="#fff" stroke-width="1"/>
<path d="M953 458L950 455H956ZM1347 458L1344 455H1350ZM343.500 482L341 479H346Z" fill="#fff"/>
<path d="M296 440H303L306 443V454H296Z" fill="#fff" stroke="#444"/>
<path d="M317 444H322L324 446H330L327 454H317Z" fill="#fddc7a" stroke="#8a6a10"/>
<rect x="341" y="441" width="13" height="13" fill="#4664aa" stroke="#1a2f6a"/><rect x="344" y="441" width="7" height="5" fill="#fff"/><rect x="344" y="449" width="7" height="5" fill="#ccd"/>
<path d="M365 440H372L375 443V454H365Z" fill="#fff" stroke="#555"/><circle cx="373" cy="451" r="3.500" fill="#d33"/>
<path d="M385 447L392 441L400 447V454H385Z" fill="#eee" stroke="#555"/><rect x="389" y="447" width="8" height="6" fill="#bcd" stroke="#555"/>
<rect x="415" y="445" width="14" height="7" fill="#ccc" stroke="#444"/><path d="M418 445L421 441H429L428 445" fill="#fff" stroke="#444"/><rect x="422" y="449" width="3" height="1" fill="#2a2"/>
<path d="M440 441H448V454H440Z" fill="#fff" stroke="#555"/><circle cx="447" cy="449" r="4" fill="#cde" stroke="#444"/><path d="M450 452L454 456" stroke="#a50" stroke-width="2"/>
<text x="466" y="448" font-size="9" font-family="Noto Sans CJK SC" fill="#111">字</text><path d="M468 452L473 456L481 444" stroke="#3464b4" stroke-width="2"/>
<rect x="490" y="442" width="5" height="11" fill="#5a7ab4"/><rect x="495" y="442" width="5" height="11" fill="#b85a5a"/><circle cx="500" cy="450" r="3.500" fill="#cde" stroke="#555"/>
<circle cx="522" cy="452" r="2.500" stroke="#2a4aa0"/><circle cx="528" cy="452" r="2.500" stroke="#2a4aa0"/><path d="M522 450L527 441M528 450L523 441" stroke="#555"/>
<rect x="543" y="442" width="9" height="10" fill="#fff" stroke="#4a6ab0"/><rect x="547" y="445" width="9" height="10" fill="#cfe" stroke="#4a6ab0"/>
<rect x="565" y="443" width="11" height="12" fill="#dcb668" stroke="#654"/><rect x="568" y="441" width="5" height="3" fill="#bbb" stroke="#555"/><rect x="572" y="448" width="8" height="8" fill="#fff" stroke="#345"/>
<path d="M586 447L591 447L588.500 450Z M650 447L655 447L652.500 450Z M683 447L688 447L685.500 450Z M746 447L751 447L748.500 450Z M1329 447L1334 447L1331.500 450Z" fill="#333"/>
<path d="M603 444L611 438L614 441L608 448Z" fill="#c8b18a" stroke="#555"/><path d="M599 452L604 444L609 449L602 455Z" fill="#e8d060" stroke="#555"/>
<path d="M630 442V448H636M631 447Q636 440 642 446Q642 452 637 455" stroke="#2a57b4" stroke-width="2"/>
<path d="M673 442V448H667M672 447Q667 440 661 446Q661 452 666 455" stroke="#aaa" stroke-width="2"/>
<circle cx="708" cy="446" r="6.500" fill="#3d9a6a" stroke="#2a5a8a"/><circle cx="705" cy="454" r="2.500" stroke="#446"/><circle cx="711" cy="454" r="2.500" stroke="#446"/>
<text x="726" y="453" font-size="14" font-weight="bold" font-family="Liberation Serif" fill="#111">Σ</text>
<text x="758" y="446" font-size="8" font-weight="bold" font-family="Liberation Sans" fill="#2a4aa0">A</text><text x="758" y="454" font-size="8" font-weight="bold" font-family="Liberation Sans" fill="#a02a2a">Z</text><path d="M771 440V453M768 450L771 454L774 450" stroke="#111"/>
<text x="782" y="446" font-size="8" font-weight="bold" font-family="Liberation Sans" fill="#a02a2a">Z</text><text x="782" y="454" font-size="8" font-weight="bold" font-family="Liberation Sans" fill="#2a4aa0">A</text><path d="M795 440V453M792 450L795 454L798 450" stroke="#111"/>
<rect x="811" y="442" width="4" height="12" fill="#3a5ab4"/><rect x="815" y="440" width="4" height="14" fill="#d8b83a"/><rect x="820" y="445" width="4" height="9" fill="#c84030"/>
<text x="834" y="452" font-size="11" font-weight="bold" fill="#4a6aca" font-family="Liberation Sans">A</text><path d="M842 441L849 442L848 450L842 453Z" fill="#e8c878" stroke="#555"/>
<circle cx="934" cy="447" r="6.500" fill="#3a6ac8" stroke="#a8c0e8" stroke-width="1.500"/><text x="931" y="451" font-size="10" font-weight="bold" fill="#fff" font-family="Liberation Sans">?</text>
<path d="M1256 442H1271M1256 445H1267M1256 448H1271M1256 451H1267M1256 454H1271" stroke="#111"/>
<path d="M1279 442H1294M1282 445H1291M1279 448H1294M1282 451H1291M1279 454H1294" stroke="#111"/>
<text x="1308" y="451" font-size="14" font-weight="bold" font-family="Liberation Serif" fill="#2a3aa0">A</text><rect x="1307" y="452" width="16" height="4" fill="#e01010"/>
<path d="M294 466H305V480H294Z" fill="#fff" stroke="#666"/><path d="M292 466H303V470H292Z" fill="#e01414"/><path d="M296 478Q301 472 300 470Q303 476 306 476" stroke="#d01010"/>
<path d="M317 466H328V480H317Z" fill="#fff" stroke="#666"/><path d="M316 466H326V470H316Z" fill="#e01414"/><rect x="325" y="465" width="8" height="6" fill="#ffe95a" stroke="#8a7a10"/><path d="M319 478Q324 472 323 470Q326 476 329 476" stroke="#d01010"/>
</svg>
<!-- formula bar -->
<div style="left:281px;top:486px;width:1071px;height:20px;background:#f2f1ee"></div>
<div style="left:283px;top:487px;width:105px;height:18px;background:#fff;font:14px/20px 'Liberation Serif';text-align:center">B6</div>
<div class="t" style="left:392px;top:488px;font-size:8px">▼</div>
<div class="t" style="left:454px;top:488px;font:italic bold 12px/16px 'Liberation Serif'">fx</div>
<div style="left:469px;top:487px;width:882px;height:18px;background:#fff"></div>
<div class="cell" style="left:480px;top:487px">8D05302YA0(<span style="font-size:15px">6天件</span>)</div>
<!-- sheet -->
<div style="left:282px;top:506px;width:1055px;height:263px;background:#fff;border-top:1px solid #555;box-sizing:border-box"></div>
<div class="hh" style="left:283px;width:34px"></div><div class="hh" style="left:317px;width:148px">A</div>
<div class="hh" style="left:465px;width:549px;background:#b5bcd4;border-right:1px solid #0a246a;border-bottom:1px solid #0a246a">B</div>
<div class="hh" style="left:1014px;width:72px">C</div><div class="hh" style="left:1086px;width:72px">D</div><div class="hh" style="left:1158px;width:72px">E</div><div class="hh" style="left:1230px;width:72px">F</div><div class="hh" style="left:1302px;width:34px;border-right:0"></div>
<div style="left:283px;top:525px;width:34px;height:244px;background:#d4d0c8"></div>
<div style="left:1014px;top:525px;width:322px;height:244px;background:repeating-linear-gradient(#fff 0 18px,#c0c0c0 18px 19px) 0 0;"></div>
<div style="left:1086px;top:525px;width:1px;height:244px;background:#c0c0c0"></div><div style="left:1158px;top:525px;width:1px;height:244px;background:#c0c0c0"></div><div style="left:1230px;top:525px;width:1px;height:244px;background:#c0c0c0"></div><div style="left:1302px;top:525px;width:1px;height:244px;background:#c0c0c0"></div>
<div style="left:317px;top:525px;width:1px;height:244px;background:#000"></div><div style="left:464px;top:525px;width:2px;height:244px;background:#000"></div><div style="left:1013px;top:525px;width:2px;height:244px;background:#000"></div>
<div class="hl" style="top:544px"></div><div class="hl" style="top:563px"></div><div class="hl" style="top:582px"></div><div class="hl" style="top:601px"></div><div class="hl" style="top:620px"></div><div class="hl" style="top:639px"></div><div class="hl" style="top:658px"></div><div class="hl" style="top:677px"></div><div class="hl" style="top:696px"></div><div class="hl" style="top:715px"></div><div class="hl" style="top:734px"></div><div class="hl" style="top:753px"></div>
<div class="rn" style="top:527px">22</div><div class="rn" style="top:546px">23</div><div class="rn" style="top:565px">24</div><div class="rn" style="top:584px">25</div><div class="rn" style="top:603px">26</div><div class="rn" style="top:622px">27</div><div class="rn" style="top:641px">28</div><div class="rn" style="top:660px">29</div><div class="rn" style="top:679px">30</div><div class="rn" style="top:698px">31</div><div class="rn" style="top:717px">32</div><div class="rn" style="top:736px">33</div><div class="rn" style="top:755px">34</div>
<div class="ca" style="top:527px">周期标记</div><div class="ca" style="top:546px">出货要求</div><div class="ca" style="top:565px">工程要求</div><div class="ca" style="top:584px">板厚<span>(mm)</span></div><div class="ca" style="top:603px">铜箔厚度<span>(OZ)</span></div><div class="ca" style="top:622px">成品尺寸长<span>(mm)</span></div><div class="ca" style="top:641px">成品尺寸宽<span>(mm)</span></div><div class="ca" style="top:660px">拼板数<span>su</span></div><div class="ca" style="top:679px">高<span>TG</span></div><div class="ca" style="top:698px">板材</div><div class="ca" style="top:717px">测试</div><div class="ca" style="top:736px">成品板厚公差<span>(mm)</span></div><div class="ca" style="top:755px;height:14px;overflow:hidden">成品尺寸长宽公差</div>
<div class="cell" style="top:527px;font-size:16px">加</div>
<div class="cell" style="top:565px"><span style="font-size:16px">树脂塞孔，</span>P2<span style="font-size:16px">制作</span></div>
<div class="cell" style="top:584px">1.57</div>
<div class="cell" style="top:603px"><span style="font-size:16px">（</span>1/0.33<span style="font-size:16px">）</span></div>
<div class="cell" style="top:622px">124.37</div><div class="cell" style="top:641px">130.75</div><div class="cell" style="top:660px">6</div>
<svg style="left:468px;top:680px" width="20" height="16" fill="none"><path d="M1 9L5 14L15 3" stroke="#333"/></svg>
<div class="cell" style="top:698px">IT-180A</div>
<div class="cell" style="top:717px;font-size:16px">飞针测试</div>
<div class="cell" style="top:736px;left:469px">(+/-0.15mm)</div>
<div class="cell" style="top:755px;left:469px;height:13px;overflow:hidden">(+/-0.10mm)</div>
<div class="mag" style="left:441px;top:622px;width:112px;height:46px"></div>
<!-- scrolls -->
<div class="chk" style="left:1336px;top:512px;width:15px;height:257px"></div>
<div style="left:1336px;top:507px;width:15px;height:5px;background:#d4d0c8;border:1px solid #888;box-sizing:border-box"></div>
<div class="btn" style="left:1336px;top:512px;width:15px;height:15px;font-size:8px;text-align:center;line-height:13px">▲</div>
<div class="btn" style="left:1336px;top:577px;width:15px;height:26px"></div>
<div class="btn" style="left:1336px;top:755px;width:15px;height:14px;font-size:8px;text-align:center;line-height:12px">▼</div>
<div style="left:283px;top:769px;width:1053px;height:15px;background:#d4d0c8;border-bottom:1px solid #666;box-sizing:border-box"></div>
<svg style="left:283px;top:769px" width="60" height="15"><path d="M6 4V11M12 4L7 7.500L12 11ZM28 4L23 7.500L28 11ZM38 4L43 7.500L38 11ZM52 4L57 7.500L52 11ZM58 4V11" fill="#000" stroke="#000" stroke-width=".8"/></svg>
<svg style="left:342px;top:768px" width="62" height="17" fill="none"><path d="M1 1L8 15H50L57 1" fill="#fff" stroke="#222"/></svg>
<div class="t" style="left:352px;top:768px;font-size:13px;text-decoration:underline;font-family:'Noto Serif CJK SC',serif">制作单</div>
<div class="btn" style="left:920px;top:770px;width:14px;height:13px;font-size:8px;text-align:center;line-height:11px">◀</div>
<div style="left:918px;top:770px;width:2px;height:13px;background:#555"></div>
<div class="btn" style="left:935px;top:770px;width:286px;height:13px"></div>
<div class="chk" style="left:1221px;top:770px;width:95px;height:13px"></div>
<div class="btn" style="left:1316px;top:770px;width:14px;height:13px;font-size:8px;text-align:center;line-height:11px">▶</div>
<div style="left:1331px;top:769px;width:1px;height:15px;background:#555"></div>
<!-- draw toolbar -->
<div style="left:281px;top:785px;width:1071px;height:29px;background:#f2f1ee;border-top:1px solid #fff;box-sizing:border-box"></div>
<div style="left:283px;top:788px;width:630px;height:25px;background:linear-gradient(#f8f7f5,#ecebe6);border-radius:3px;z-index:0"></div>
<div style="left:913px;top:788px;width:12px;height:25px;background:linear-gradient(#999,#666);border-radius:2px"></div>
<div class="xm" style="left:292px;top:792px">绘图 (R)</div>
<div class="xm" style="left:381px;top:792px">自选图形 (U)</div>
<svg style="left:0;top:0" width="1408" height="872" fill="none" stroke-width="1">
<path d="M338 799L343 799L340.500 802Z M449 799L454 799L451.500 802Z M720 799L725 799L722.500 802Z M754 799L759 799L756.500 802Z M788 799L793 799L790.500 802Z" fill="#333"/>
<path d="M355 794L355 806L358 803L361 808L363 807L360 802L364 802Z" fill="#dde6f7" stroke="#4a5a8a"/>
<path d="M372 790V808M692 790V808" stroke="#aaa"/>
<path d="M465 795L475 805" stroke="#444"/><path d="M487 795L496 805" stroke="#111"/><path d="M497 806L490 802L494 799Z" fill="#111"/>
<rect x="509" y="794" width="15" height="12" stroke="#222"/><ellipse cx="539" cy="800" rx="8" ry="6" stroke="#444"/>
<rect x="555" y="794" width="13" height="12" fill="#fff" stroke="#5a7ab0"/><path d="M557 797H566M557 800H566M557 803H566" stroke="#4a5a9a"/><rect x="577" y="794" width="13" height="12" fill="#fff" stroke="#5a7ab0"/><path d="M579 796V804M582 796V804M585 796V804M588 796V804" stroke="#4a5a9a"/>
<path d="M601 806L613 793V806Z" fill="#3060c0"/><circle cx="630" cy="800" r="6" stroke="#888" stroke-dasharray="3 2"/><circle cx="630" cy="794" r="2" fill="#d05a20"/><circle cx="636" cy="802" r="2" fill="#3a9a3a"/><circle cx="624" cy="802" r="2" fill="#3a5ab0"/>
<rect x="648" y="793" width="12" height="13" fill="#e6d8a8" stroke="#666"/><circle cx="654" cy="798" r="2.500" fill="#c05030"/><path d="M650 805Q654 799 658 805Z" fill="#a03a20"/>
<rect x="671" y="793" width="13" height="13" fill="#cde" stroke="#666"/><path d="M672 804L677 798L683 804Z" fill="#a88"/>
<path d="M700 793L709 801L703 806L698 800Z" fill="#cdd" stroke="#444"/><rect x="698" y="805" width="16" height="4" fill="#fff000"/>
<path d="M735 804L747 794" stroke="#3a5ab4" stroke-width="2"/><rect x="733" y="805" width="16" height="4" fill="#0020e0"/>
<text x="768" y="803" font-size="14" font-weight="bold" fill="#2a3aa0" font-family="Liberation Serif">A</text><rect x="767" y="804" width="16" height="5" fill="#e00000"/>
<path d="M799 797H815M799 800H815M799 804H815" stroke="#000" stroke-width="1.600"/><path d="M822 795H838M822 798H838M822 801H838M822 804H838" stroke="#555" stroke-dasharray="1.500 1.500"/>
<path d="M846 796H860M857 794L860 796L857 798M846 803H860M849 801L846 803L849 805M846 800H860" stroke="#333"/>
<rect x="869" y="794" width="12" height="11" fill="#3c9a4c" stroke="#185a28"/><path d="M893 796L897 793H906V803L902 806H893Z" fill="#7cbe8a" stroke="#285a38"/><path d="M893 796H902V806M902 796L906 793" stroke="#285a38"/>
<path d="M287 793V808" stroke="#999" stroke-dasharray="1.500 1.500" stroke-width="2"/>
<path d="M917 803H921" stroke="#fff"/><path d="M919 807L916 804H922Z" fill="#fff"/>
</svg>
<div style="left:281px;top:814px;width:1072px;height:17px;background:#d4d0c8"></div>
<div class="xm" style="left:292px;top:815px">就绪</div>
<div class="st" style="left:961px;width:33px"></div><div class="st" style="left:999px;width:111px"></div><div class="st" style="left:1115px;width:27px"></div><div class="st" style="left:1147px;width:27px"></div><div class="st" style="left:1179px;width:26px;border:0;height:14px"></div><div class="st" style="left:1211px;width:27px"></div><div class="st" style="left:1243px;width:27px"></div><div class="st" style="left:1275px;width:51px"></div>
<div class="xm" style="left:1180px;top:815px">数字</div>
<svg style="left:1340px;top:818px" width="14" height="14" fill="none"><path d="M4 13L13 4M7 13L13 7M10 13L13 10" stroke="#777"/></svg>

<!-- IME bar -->
<div style="left:1181px;top:851px;width:148px;height:21px;background:#eaf5fc;border:1px solid #bcd8ea;box-sizing:border-box"></div>
<div style="left:1183px;top:853px;width:17px;height:17px;background:#e8541c;border-radius:4px;color:#fff;font:bold 14px/17px 'Liberation Sans';text-align:center;transform:rotate(-8deg)">S</div>
<div class="t" style="left:1205px;top:852px;font-size:15px;font-weight:bold;color:#3a8fd0;line-height:18px">中</div>
<svg style="left:1225px;top:852px" width="104" height="20" fill="none">
<path d="M6 3Q12 10 2 15Q10 17 12 10Q12 5 6 3Z" fill="#3a8fd0"/>
<circle cx="25" cy="6" r="2" stroke="#3a8fd0"/><path d="M30 11Q31 14 28 16" stroke="#3a8fd0" stroke-width="2"/>
<rect x="39" y="4" width="16" height="11" fill="#5ba4dc" stroke="#3a8fd0"/><path d="M41 7H53M41 10H53M43 13H51" stroke="#fff" stroke-dasharray="1.500 1"/>
<circle cx="67" cy="5" r="3.500" fill="#aaa"/><path d="M62 16Q62 9 67 9Q72 9 72 16Z" fill="#aaa"/>
<path d="M80 16L88 8Q87 3 92 2L90 6L93 8L96 5Q96 10 90 10L84 17Z" fill="#3a8fd0"/>
</svg>
</body></html>
